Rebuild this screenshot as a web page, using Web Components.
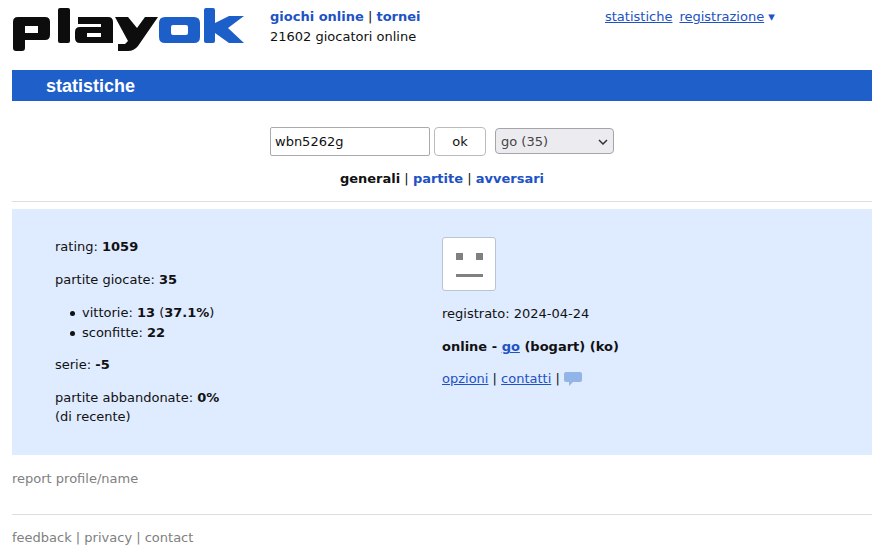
<!DOCTYPE html>
<html lang="it">
<head>
<meta charset="utf-8">
<title>statistiche</title>
<style>
  html, body { margin: 0; background: #fff; }
  body { font: 13px/19.5px "DejaVu Sans", sans-serif; color: #111; }
</style>
</head>
<body>
<playok-page>
  <playok-header></playok-header>
  <playok-banner>statistiche</playok-banner>
  <player-search name="wbn5262g"></player-search>
  <player-tabs></player-tabs>
  <player-panel></player-panel>
  <playok-footer></playok-footer>
</playok-page>

<script>
// shared link look, every shadow root needs its own copy
const linkCss = `
    a { color: #2152c4; }
    a.plain { text-decoration: none; font-weight: bold; }
`;

class PlayokPage extends HTMLElement {
    constructor() {
        super();
        this.attachShadow({ mode: 'open' }).innerHTML = `
            <style>
                :host { display: block; width: 860px; margin-left: 12px; }
            </style>
            <slot></slot>
        `;
    }
}

class PlayokHeader extends HTMLElement {
    constructor() {
        super();
        this.attachShadow({ mode: 'open' }).innerHTML = `
            <style>
                :host { display: flex; height: 70px; }
                ${linkCss}
                svg { display: block; margin-top: 8px; flex: none; }
                .info { margin: 7px 0 0 26px; width: 335px; flex: none; line-height: 20px; }
                .right { margin-top: 7px; display: flex; gap: 7px; line-height: 20px; }
                .arrow { color: #2152c4; text-decoration: none; }
            </style>
            <svg width="232" height="44" viewBox="12 8 232 44" aria-label="playok">
                <defs><filter id="soft"><feGaussianBlur stdDeviation="0.45"/></filter></defs>
                <g filter="url(#soft)">
                    <g fill="#0b0b0b" fill-rule="evenodd">
                        <path d="M13 22q0-5 5-5H45q5 0 5 5V35q0 5-5 5H25V48q0 3-3 3H16q-3 0-3-3ZM25 26V33H38V26Z"/>
                        <rect x="58" y="8" width="12" height="35" rx="2"/>
                        <path d="M78 17H108q5 0 5 5V43H80q-5 0-5-5V32q0-5 5-5H101V24H78ZM87 33V37H101V33Z"/>
                        <path d="M115 17H128L137 28L145 17H158L138 46q-4 5-10 5H118V44H125L128 41Z"/>
                    </g>
                    <g fill="#1f5fc9" fill-rule="evenodd">
                        <path d="M165 17H194q6 0 6 6V37q0 6-6 6H165q-6 0-6-6V23q0-6 6-6ZM173 25q-2 0-2 2V33q0 2 2 2H186q2 0 2-2V27q0-2-2-2Z"/>
                        <path d="M206 8H213q2 0 2 2V23L229 16H244L228 28L244 43H229L215 33V41q0 2-2 2H206q-2 0-2-2V10q0-2 2-2Z"/>
                    </g>
                </g>
            </svg>
            <div class="info">
                <div><a class="plain" href="#">giochi online</a> | <a class="plain" href="#">tornei</a></div>
                <div>21602 giocatori online</div>
            </div>
            <div class="right">
                <a href="#">statistiche</a>
                <span><a href="#">registrazione</a> <span class="arrow">▾</span></span>
            </div>
        `;
    }
}

class PlayokBanner extends HTMLElement {
    constructor() {
        super();
        this.attachShadow({ mode: 'open' }).innerHTML = `
            <style>
                :host {
                    display: block;
                    height: 31px;
                    padding-left: 34px;
                    background: #1f5fc9;
                    color: #fff;
                    font: bold 18px/32px "Liberation Sans", sans-serif;
                }
            </style>
            <slot></slot>
        `;
    }
}

class PlayerSearch extends HTMLElement {
    constructor() {
        super();
        this.attachShadow({ mode: 'open' }).innerHTML = `
            <style>
                :host {
                    display: flex;
                    justify-content: center;
                    align-items: flex-start;
                    height: 29px;
                    margin-top: 26px;
                }
                input, button, select { box-sizing: border-box; font: 13px "DejaVu Sans", sans-serif; color: #111; }
                input {
                    width: 160px; height: 29px; padding: 0 4px;
                    border: 1px solid #aaa; border-radius: 2px; background: #fff; outline: none;
                }
                button {
                    width: 52px; height: 29px; margin-left: 4px; padding: 0;
                    border: 1px solid #bbb; border-radius: 4px; background: #fff;
                }
                .pick { position: relative; margin: 1px 0 0 9px; }
                select {
                    appearance: none; display: block;
                    width: 119px; height: 26px; padding: 0 0 0 5px;
                    border: 1px solid #a5a5a8; border-radius: 4px; background: #ecebf0; color: #444;
                }
                .pick svg { position: absolute; right: 6px; top: 11px; pointer-events: none; }
            </style>
            <input type="text">
            <button>ok</button>
            <div class="pick">
                <select><option>go (35)</option></select>
                <svg width="10" height="6" viewBox="0 0 10 6"><path d="M1 1L5 5L9 1" fill="none" stroke="#333" stroke-width="1.5"/></svg>
            </div>
        `;
        this.shadowRoot.querySelector('input').value = this.getAttribute('name') || '';
        this.shadowRoot.querySelector('input').setAttribute('value', this.getAttribute('name') || '');
    }
}

class PlayerTabs extends HTMLElement {
    constructor() {
        super();
        this.attachShadow({ mode: 'open' }).innerHTML = `
            <style>
                :host {
                    display: block;
                    margin-top: 13px;
                    padding-bottom: 12px;
                    border-bottom: 1px solid #ddd;
                    text-align: center;
                }
                ${linkCss}
            </style>
            <b>generali</b> | <a class="plain" href="#">partite</a> | <a class="plain" href="#">avversari</a>
        `;
    }
}

class PlayerPanel extends HTMLElement {
    constructor() {
        super();
        this.attachShadow({ mode: 'open' }).innerHTML = `
            <style>
                :host {
                    display: grid;
                    grid-template-columns: 387px 1fr;
                    height: 218px;
                    margin-top: 7px;
                    padding: 28px 0 0 43px;
                    background: #dfebff;
                }
                ${linkCss}
                p { margin: 0 0 13.3px; }
                p.wide { margin-bottom: 14px; }
                ul { margin: 0 0 12.6px; padding-left: 27px; list-style: none; }
                li { position: relative; line-height: 20px; }
                /* the default disc is too small here */
                li::before {
                    content: ''; position: absolute; left: -12px; top: 8px;
                    width: 5px; height: 5px; border-radius: 50%; background: #111;
                }
                .last { line-height: 19px; }
                .online { margin-bottom: 12.6px; }
                .avatar {
                    display: block; box-sizing: border-box;
                    width: 54px; height: 54px; margin-bottom: 13px;
                    border: 1px solid #bbc4d4; border-radius: 3px; background: #fff;
                }
                .bubble { vertical-align: -3px; }
            </style>
            <div>
                <p class="wide">rating: <b>1059</b></p>
                <p>partite giocate: <b>35</b></p>
                <ul>
                    <li>vittorie: <b>13</b> (<b>37.1%</b>)</li>
                    <li>sconfitte: <b>22</b></li>
                </ul>
                <p>serie: <b>-5</b></p>
                <p class="last">partite abbandonate: <b>0%</b><br>(di recente)</p>
            </div>
            <div>
                <svg class="avatar" viewBox="0 0 52 52">
                    <rect x="13" y="15" width="7" height="7" fill="#808080"/>
                    <rect x="33" y="15" width="7" height="7" fill="#808080"/>
                    <rect x="13" y="36" width="27" height="3" fill="#808080"/>
                </svg>
                <p class="wide">registrato: 2024-04-24</p>
                <p class="online"><b>online - <a href="#">go</a> (bogart) (ko)</b></p>
                <p><a href="#">opzioni</a> | <a href="#">contatti</a> | <svg class="bubble" width="18" height="14" viewBox="0 0 18 14"><path d="M2 0H16q2 0 2 2V8q0 2-2 2H9L5 14V10H2q-2 0-2-2V2q0-2 2-2Z" fill="#92b4e6"/></svg></p>
            </div>
        `;
    }
}

class PlayokFooter extends HTMLElement {
    constructor() {
        super();
        this.attachShadow({ mode: 'open' }).innerHTML = `
            <style>
                :host { display: block; color: #808080; }
                .report { margin-top: 14px; height: 45px; }
                .links { padding-top: 13px; border-top: 1px solid #ddd; }
            </style>
            <div class="report">report profile/name</div>
            <div class="links">feedback | privacy | contact</div>
        `;
    }
}

customElements.define('playok-page', PlayokPage);
customElements.define('playok-header', PlayokHeader);
customElements.define('playok-banner', PlayokBanner);
customElements.define('player-search', PlayerSearch);
customElements.define('player-tabs', PlayerTabs);
customElements.define('player-panel', PlayerPanel);
customElements.define('playok-footer', PlayokFooter);
</script>
</body>
</html>
